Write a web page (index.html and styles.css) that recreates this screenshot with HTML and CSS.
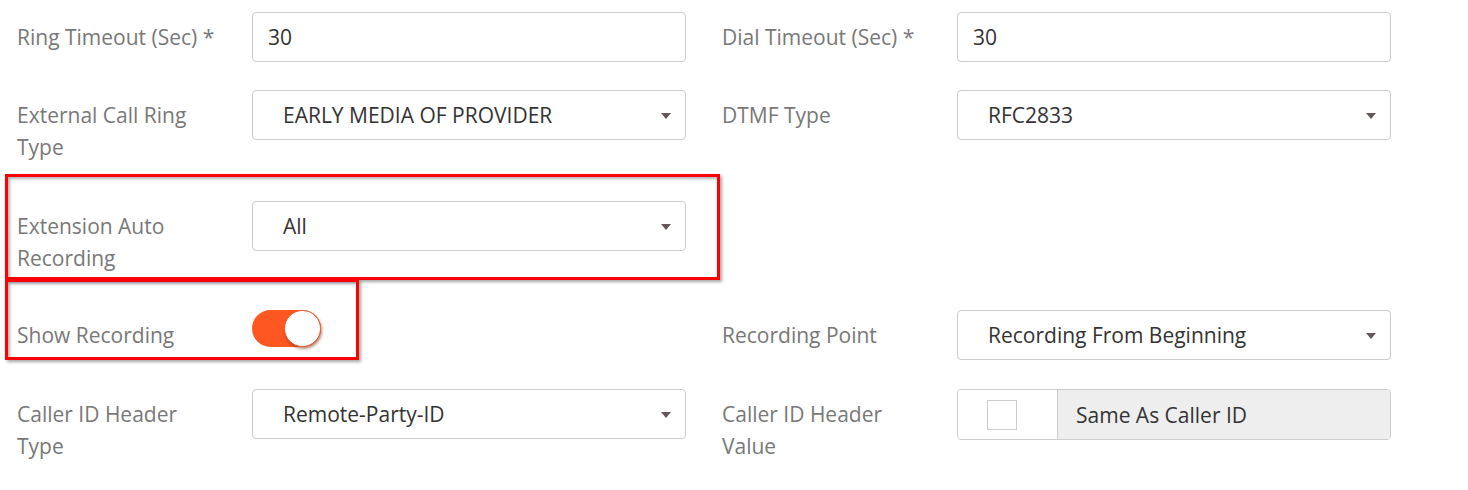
FILE: index.html
```html
<!DOCTYPE html>
<html>
<head>
<meta charset="utf-8">
<link rel="stylesheet" href="styles.css">
</head>
<body>
<div class="form">
  <div class="row row-1">
    <div class="field">
      <label class="label">Ring Timeout (Sec) *</label>
      <div class="control"><div class="input">30</div></div>
    </div>
    <div class="field">
      <label class="label">Dial Timeout (Sec) *</label>
      <div class="control"><div class="input">30</div></div>
    </div>
  </div>

  <div class="row row-2">
    <div class="field">
      <label class="label">External Call Ring Type</label>
      <div class="control"><div class="select">EARLY MEDIA OF PROVIDER<span class="caret"></span></div></div>
    </div>
    <div class="field">
      <label class="label">DTMF Type</label>
      <div class="control"><div class="select">RFC2833<span class="caret"></span></div></div>
    </div>
  </div>

  <div class="row row-3">
    <div class="field">
      <label class="label">Extension Auto Recording</label>
      <div class="control"><div class="select">All<span class="caret"></span></div></div>
    </div>
    <div class="field"></div>
    <div class="mark mark-a"></div>
  </div>

  <div class="row row-4">
    <div class="field">
      <label class="label">Show Recording</label>
      <div class="control"><div class="switch"><span class="knob"></span></div></div>
    </div>
    <div class="field">
      <label class="label">Recording Point</label>
      <div class="control"><div class="select">Recording From Beginning<span class="caret"></span></div></div>
    </div>
    <div class="mark mark-b"></div>
  </div>

  <div class="row row-5">
    <div class="field">
      <label class="label">Caller ID Header Type</label>
      <div class="control"><div class="select">Remote-Party-ID<span class="caret"></span></div></div>
    </div>
    <div class="field">
      <label class="label">Caller ID Header Value</label>
      <div class="control">
        <div class="group">
          <div class="addon"><span class="checkbox"></span></div>
          <div class="group-text">Same As Caller ID</div>
        </div>
      </div>
    </div>
  </div>
</div>
</body>
</html>
```

FILE: styles.css
```css
html, body {
  margin: 0;
  padding: 0;
  background: #ffffff;
}
body {
  font-family: "Open Sans", "Liberation Sans", sans-serif;
  font-size: 21px;
  color: #333333;
}
.form {
  padding: 12px 0 0 17px;
}
.row {
  display: flex;
  position: relative;
}
.row-1 { margin-bottom: 28px; }
.row-2 { margin-bottom: 38px; }
.row-3 { margin-bottom: 36px; }
.row-4 { margin-bottom: 29px; }
.field {
  display: flex;
  align-items: flex-start;
  width: 705px;
}
.label {
  width: 235px;
  padding-top: 9px;
  line-height: 32px;
  color: #787878;
  padding-right: 30px;
  box-sizing: border-box;
}
.control {
  width: 434px;
}
.input, .select {
  box-sizing: border-box;
  height: 50px;
  border: 1px solid #cccccc;
  border-radius: 4px;
  display: flex;
  align-items: center;
  color: #333333;
  position: relative;
}
.input { padding-left: 15px; }
.select { padding-left: 30px; }
.caret {
  position: absolute;
  right: 14px;
  top: 22px;
  width: 0;
  height: 0;
  border-left: 5px solid transparent;
  border-right: 5px solid transparent;
  border-top: 6px solid #655858;
}
.switch {
  width: 69px;
  height: 37px;
  border-radius: 19px;
  background: #ff5722;
  position: relative;
}
.knob {
  position: absolute;
  right: 0;
  top: 0;
  width: 37px;
  height: 37px;
  box-sizing: border-box;
  border-radius: 50%;
  background: #ffffff;
  border: 1px solid #f05a2a;
  box-shadow: 1px 2px 3px rgba(120, 40, 10, 0.55);
}
.group {
  display: flex;
  height: 51px;
  box-sizing: border-box;
  border: 1px solid #cccccc;
  border-radius: 4px;
  overflow: hidden;
}
.addon {
  width: 100px;
  border-right: 1px solid #cccccc;
  display: flex;
  align-items: center;
  padding-left: 29px;
  box-sizing: border-box;
  background: #ffffff;
}
.checkbox {
  width: 30px;
  height: 30px;
  box-sizing: border-box;
  border: 1px solid #cccccc;
  background: #ffffff;
}
.group-text {
  flex: 1;
  background: #eeeeee;
  display: flex;
  align-items: center;
  padding-left: 18px;
  color: #333333;
}
.mark {
  position: absolute;
  border: 3px solid #ff0000;
  box-sizing: border-box;
  box-shadow: 2px 2px 3px rgba(0, 0, 0, 0.35), inset 2px 2px 3px rgba(0, 0, 0, 0.3);
  pointer-events: none;
}
.mark-a {
  left: -12px;
  top: -27px;
  width: 715px;
  height: 106px;
}
.mark-b {
  left: -12px;
  top: -31px;
  width: 354px;
  height: 81px;
}
```
